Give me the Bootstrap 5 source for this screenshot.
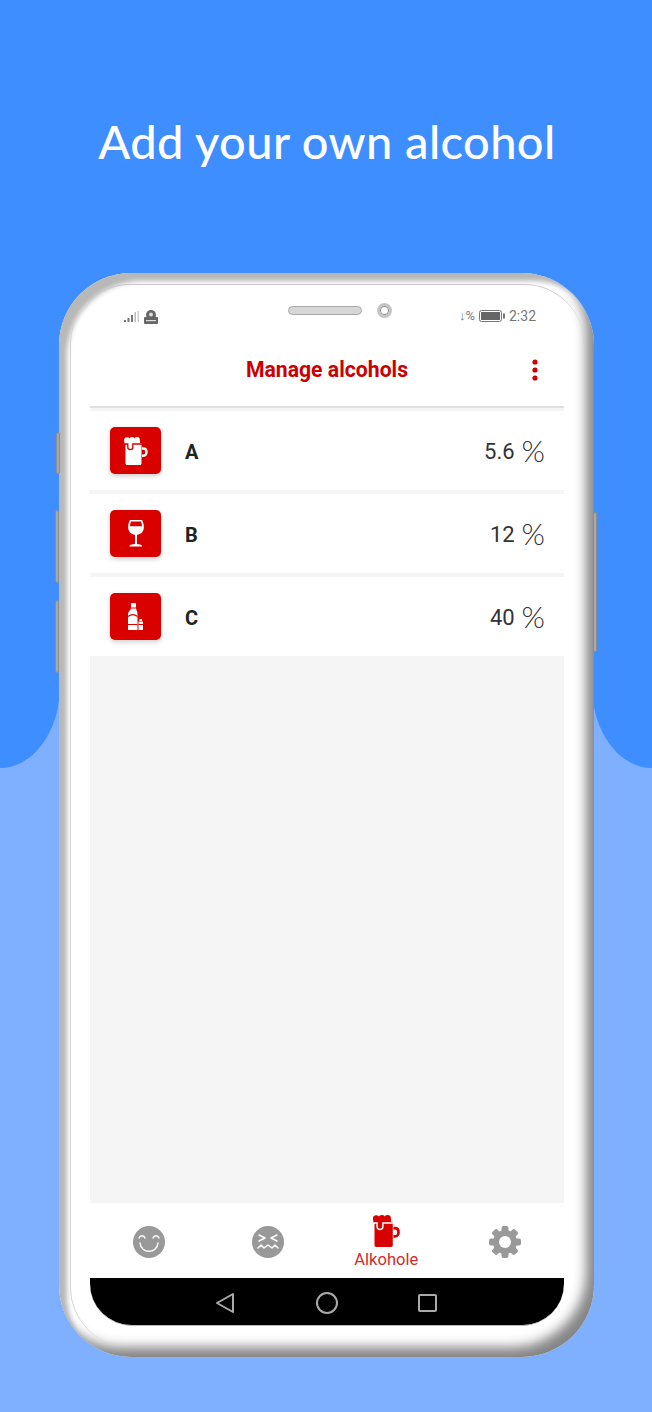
<!DOCTYPE html>
<html lang="en">
<head>
  <meta charset="UTF-8">
  <meta name="viewport" content="width=device-width, initial-scale=1.0">
  <title>Add your own alcohol</title>
  <link href="https://cdn.jsdelivr.net/npm/bootstrap@5.3.0/dist/css/bootstrap.min.css" rel="stylesheet">
  <style>
    body {
      background-color: #7eb0ff;
      font-family: Roboto, sans-serif;
      margin: 0;
    }
    .promo {
      position: relative;
      width: 652px;
      height: 1412px;
      overflow: hidden;
    }
    .promo-back {
      position: absolute;
      top: 0;
      left: 0;
      width: 100%;
      height: 420px;
      background-color: #3f8eff;
    }
    .stub {
      position: absolute;
      top: 0;
      width: 60px;
      height: 768px;
      background-color: #3f8eff;
    }
    .stub-left { left: 0; border-bottom-right-radius: 60px 82px; }
    .stub-right { right: 0; border-bottom-left-radius: 60px 82px; }
    .promo-top {
      position: relative;
      height: 273px;
      padding-top: 113px;
      padding-left: 2px;
    }
    .promo-title {
      font-family: Lato, sans-serif;
      font-size: 47px;
      line-height: 56px;
      color: #fff;
      margin: 0;
      letter-spacing: 0.4px;
    }
    .phone {
      position: relative;
      width: 535px;
      height: 1084px;
      margin-left: 59px;
      border-radius: 72px;
      padding: 11px 10px 10px 11px;
      background-color: #fff;
      box-shadow: inset -11px -13px 12px -3px #868686, inset 11px 11px 5px -3px #b8b8b8;
    }
    .side-key {
      position: absolute;
      width: 4px;
      background-color: #a8a8a8;
      border: 1px solid #8d8d8d;
      border-radius: 2px;
    }
    .key-a { left: -3px; top: 159px; height: 42px; }
    .key-b { left: -4px; top: 237px; height: 73px; }
    .key-c { left: -4px; top: 327px; height: 73px; }
    .key-d { right: -3px; top: 239px; height: 140px; }
    .phone-body {
      position: relative;
      height: 1063px;
      border-radius: 60px;
      padding: 0 20px 21px 19px;
      border-top: 1px solid #c9c9c9;
      border-left: 1px solid #d4d4d4;
    }
    .status-row {
      height: 55px;
      padding: 23px 28px 0 34px;
      font-size: 14px;
      color: #777;
    }
    .status-signal { margin-top: 2px; }
    .status-right { margin-top: -1px; }
    .status-time { line-height: 18px; margin-left: 4px; }
    .speaker-wrap { margin-top: -2px; margin-left: 128px; }
    .speaker {
      width: 74px;
      height: 9px;
      border-radius: 5px;
      background-color: #d6d6d6;
      border: 1px solid #a9a9a9;
    }
    .camera {
      width: 15px;
      height: 15px;
      border-radius: 50%;
      background-color: #fff;
      border: 3px solid #c4c4c4;
      box-shadow: inset 0 0 0 1px #888;
      margin-left: 15px;
      margin-top: -3px;
    }
    .app-bar {
      height: 68px;
      position: relative;
      border-bottom: 2px solid #e0e0e0;
    }
    .app-title {
      font-size: 21.2px;
      font-weight: 700;
      color: #cc0000;
      line-height: 60px;
    }
    .menu-dots {
      position: absolute;
      right: 26px;
      top: 19px;
    }
    .drink-area {
      height: 795px;
      background-color: #f5f5f5;
      padding-top: 3px;
    }
    .drink-row {
      height: 79px;
      background-color: #fff;
      margin-bottom: 4px;
      padding: 0 19px 0 20px;
    }
    .drink-badge {
      width: 51px;
      height: 47px;
      background-color: #d90000;
      border-radius: 5px;
      box-shadow: 0 2px 5px rgba(0, 0, 0, .2);
      flex-shrink: 0;
    }
    .drink-name {
      font-size: 20px;
      font-weight: 700;
      color: #222;
      margin-left: 24px;
      padding-top: 2px;
    }
    .drink-value {
      font-size: 22px;
      color: #333;
      margin-left: auto;
      padding-top: 2px;
    }
    .percent-sign {
      font-family: Lato, sans-serif;
      font-weight: 300;
      font-size: 30px;
      line-height: 22px;
      margin-left: 7px;
      vertical-align: -3px;
    }
    .tab-bar { height: 75px; background-color: #fff; }
    .tab-slot { width: 118.5px; height: 75px; padding-top: 3px; }
    .tab-label { font-size: 16.5px; line-height: 16px; color: #d22c2c; margin-top: 5px; }
    .mug-tab { margin-top: 9px; }
    .soft-keys {
      height: 48px;
      background-color: #000;
      border-radius: 0 0 42px 42px;
      border-bottom: 1px solid #bbb;
      padding-top: 3px;
    }
  </style>
</head>
<body>
<div class="promo">
  <div class="promo-back"></div>
  <div class="stub stub-left"></div>
  <div class="stub stub-right"></div>
  <div class="promo-top text-center">
    <h1 class="promo-title">Add your own alcohol</h1>
  </div>
  <div class="phone">
    <div class="side-key key-a"></div>
    <div class="side-key key-b"></div>
    <div class="side-key key-c"></div>
    <div class="side-key key-d"></div>
    <div class="phone-body d-flex flex-column">
      <div class="status-row d-flex align-items-start">
        <svg class="status-signal" width="36" height="16" viewBox="0 0 36 16">
          <g fill="#777">
            <rect x="0" y="10" width="2" height="2"/><rect x="3.500" y="8" width="2" height="4"/><rect x="7" y="5" width="2" height="7"/>
            <rect x="10.500" y="2" width="1.500" height="10" fill="#bbb"/><rect x="13.500" y="1" width="1.500" height="11" fill="#ccc"/>
            <circle cx="27" cy="5" r="5" fill="#666"/>
            <rect x="20" y="7" width="14" height="7" rx="1" fill="#666"/>
            <circle cx="27" cy="4.500" r="2" fill="#ddd"/>
            <rect x="22" y="10" width="10" height="1.200" fill="#ddd"/>
          </g>
        </svg>
        <div class="speaker-wrap d-flex">
          <div class="speaker"></div>
          <div class="camera"></div>
        </div>
        <div class="status-right ms-auto d-flex align-items-center">
          <span style="font-size:13px;line-height:18px">↓%</span>
          <svg width="26" height="12" viewBox="0 0 26 12" class="ms-1">
            <rect x=".5" y=".5" width="22" height="11" rx="2" fill="none" stroke="#777"/>
            <rect x="2" y="2" width="19" height="8" fill="#666"/>
            <rect x="24" y="3.500" width="2" height="5" fill="#777"/>
          </svg>
          <span class="status-time">2:32</span>
        </div>
      </div>
      <div class="app-bar text-center">
        <div class="app-title">Manage alcohols</div>
        <svg class="menu-dots" width="6" height="22" viewBox="0 0 6 22"><g fill="#cc0000"><circle cx="3" cy="3" r="2.600"/><circle cx="3" cy="11" r="2.600"/><circle cx="3" cy="19" r="2.600"/></g></svg>
      </div>
      <div class="drink-area">
        <div class="drink-row d-flex align-items-center">
          <div class="drink-badge d-flex align-items-center justify-content-center">
            <svg width="24" height="28" viewBox="0 0 24 28">
              <g fill="#fff">
                <circle cx="3" cy="3" r="2.800"/><circle cx="8" cy="2.800" r="2.800"/><circle cx="13" cy="2.800" r="2.800"/>
                <rect x="0.500" y="3" width="15.500" height="3.500"/>
                <path d="M1.500 6h16v20.500c0 .8-.6 1.500-1.500 1.500H3c-.8 0-1.500-.7-1.500-1.500z"/>
              </g>
              <path fill="none" stroke="#d90000" stroke-width="1.300" d="M1 7h2.800v3.500c0 2.800 5 2.800 5 0V7H18"/>
              <path fill="none" stroke="#fff" stroke-width="2.400" d="M18 11.500h1.500c2 0 3 1.700 3 3.500s-1 3.800-3 3.800H18"/>
            </svg>
          </div>
          <span class="drink-name">A</span>
          <span class="drink-value">5.6<span class="percent-sign">%</span></span>
        </div>
        <div class="drink-row d-flex align-items-center">
          <div class="drink-badge d-flex align-items-center justify-content-center">
            <svg width="16" height="28" viewBox="0 0 16 28">
              <path fill="#fff" d="M2 0h12l.8 1.500c1 2.500 1.300 5 .9 7.300-.6 3.300-3 5.700-6.700 6V24c2 .2 3.800.5 4.500 1.200.4.300.5.8.5 1.300H1.500c0-.5.100-1 .5-1.300.7-.7 2.500-1 4.500-1.200h.5v-9.200c-3.700-.3-6.100-2.700-6.700-6-.4-2.300-.1-4.800.9-7.300zM3 1.500c-.7 1.800-1 3.300-1 4.800h12c0-1.500-.3-3-1-4.800z"/>
            </svg>
          </div>
          <span class="drink-name">B</span>
          <span class="drink-value">12<span class="percent-sign">%</span></span>
        </div>
        <div class="drink-row d-flex align-items-center mb-0">
          <div class="drink-badge d-flex align-items-center justify-content-center">
            <svg width="15" height="27" viewBox="0 0 15 27">
              <g fill="#fff">
                <rect x="3" y="0" width="5" height="4.500"/>
                <path d="M3 5.500h5c.3 2 1.500 3 1.500 5.500v16H0V11c0-2.500 2.700-3.500 3-5.500z"/>
                <rect x="10.500" y="18.500" width="4.500" height="8.500"/>
                <rect x="11.500" y="16" width="2.500" height="2"/>
              </g>
              <path fill="none" stroke="#d90000" stroke-width="1.200" d="M0 13.500c3-2.500 6.500-2.500 9.500 0M0 21.500h9.500M10.500 21.500h4.500"/>
            </svg>
          </div>
          <span class="drink-name">C</span>
          <span class="drink-value">40<span class="percent-sign">%</span></span>
        </div>
      </div>
      <div class="tab-bar d-flex">
        <div class="tab-slot d-flex flex-column align-items-center justify-content-center">
          <svg width="32" height="32" viewBox="0 0 32 32">
            <circle cx="16" cy="16" r="16" fill="#999"/>
            <g fill="none" stroke="#fff" stroke-width="1.400" stroke-linecap="round">
              <path d="M6 12c1-3 5-3 6 0M20 12c1-3 5-3 6 0M7 17c1 11 17 11 18 0"/>
            </g>
          </svg>
        </div>
        <div class="tab-slot d-flex flex-column align-items-center justify-content-center">
          <svg width="32" height="32" viewBox="0 0 32 32">
            <circle cx="16" cy="16" r="16" fill="#999"/>
            <g fill="none" stroke="#fff" stroke-width="1.500" stroke-linecap="round" stroke-linejoin="round">
              <path d="M7 9l6 3-6 3M25 9l-6 3 6 3M6 22l3-3 3 3 4-3 4 3 3-3 3 3"/>
            </g>
          </svg>
        </div>
        <div class="tab-slot d-flex flex-column align-items-center">
          <svg class="mug-tab" width="29" height="32" viewBox="0 0 24 28">
            <g fill="#d90000">
              <circle cx="3" cy="3" r="2.800"/><circle cx="8" cy="2.800" r="2.800"/><circle cx="13" cy="2.800" r="2.800"/>
              <rect x="0.500" y="3" width="15.500" height="3.500"/>
              <path d="M1.500 6h16v20.500c0 .8-.6 1.500-1.500 1.500H3c-.8 0-1.500-.7-1.500-1.500z"/>
            </g>
            <path fill="none" stroke="#fff" stroke-width="1.300" d="M1 7h2.800v3.500c0 2.800 5 2.800 5 0V7H18"/>
            <path fill="none" stroke="#d90000" stroke-width="2.400" d="M18 11.500h1.500c2 0 3 1.700 3 3.500s-1 3.800-3 3.800H18"/>
          </svg>
          <span class="tab-label">Alkohole</span>
        </div>
        <div class="tab-slot d-flex flex-column align-items-center justify-content-center">
          <svg width="32" height="32" viewBox="0 0 32 32">
            <g fill="#999">
              <rect x="12.500" y="0" width="7" height="32" rx="2"/>
              <rect x="12.500" y="0" width="7" height="32" rx="2" transform="rotate(45 16 16)"/>
              <rect x="12.500" y="0" width="7" height="32" rx="2" transform="rotate(90 16 16)"/>
              <rect x="12.500" y="0" width="7" height="32" rx="2" transform="rotate(135 16 16)"/>
              <circle cx="16" cy="16" r="12"/>
            </g>
            <circle cx="16" cy="16" r="6" fill="#fff"/>
          </svg>
        </div>
      </div>
      <div class="soft-keys d-flex align-items-center justify-content-center">
        <svg width="224" height="24" viewBox="0 0 224 24">
          <g fill="none" stroke="#aaa" stroke-width="2" stroke-linejoin="round">
            <path d="M18 3v18L2 12z"/>
            <circle cx="112" cy="12" r="10"/>
            <rect x="204" y="4" width="17" height="16" rx="1"/>
          </g>
        </svg>
      </div>
    </div>
  </div>
</div>
<script src="https://cdn.jsdelivr.net/npm/bootstrap@5.3.0/dist/js/bootstrap.bundle.min.js"></script>
</body>
</html>
